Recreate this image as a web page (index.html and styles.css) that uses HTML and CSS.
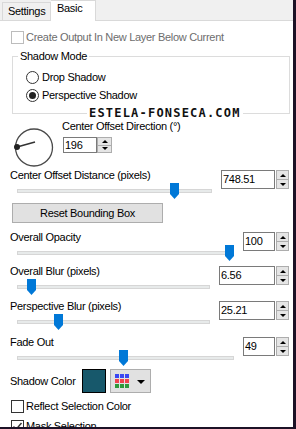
FILE: index.html
```html
<!DOCTYPE html>
<html>
<head>
<meta charset="utf-8">
<link rel="stylesheet" href="styles.css">
</head>
<body>
<div class="window">
  <div class="tabs">
    <div class="tab">Settings</div>
    <div class="tab active">Basic</div>
  </div>
  <div class="panel">
    <div class="check disabled"><span class="box"></span>Create Output In New Layer Below Current</div>

    <fieldset class="group">
      <legend>Shadow Mode</legend>
      <div class="radio"><span class="dot"></span>Drop Shadow</div>
      <div class="radio on"><span class="dot"></span>Perspective Shadow</div>
    </fieldset>
    <div class="watermark">ESTELA-FONSECA.COM</div>

    <div class="dir">
      <svg class="dial" width="42" height="42" viewBox="0 0 42 42">
        <circle cx="21" cy="20.5" r="18.5" fill="none" stroke="#4a4a4a" stroke-width="1.3"/>
        <line x1="4" y1="20" x2="22" y2="15" stroke="#333" stroke-width="1.6"/>
        <circle cx="4" cy="20" r="3" fill="#222"/>
      </svg>
      <div class="dir-ctl">
        <div class="lbl">Center Offset Direction (°)</div>
        <div class="spin sm">
          <div class="spin-box">196</div>
          <div class="spin-btns"><span class="sb up"></span><span class="sb down"></span></div>
        </div>
      </div>
    </div>

    <div class="srow">
      <div class="sleft">
        <div class="lbl">Center Offset Distance (pixels)</div>
        <div class="slider"><div class="track"></div><svg class="thumb" style="left:153px" width="9" height="16" viewBox="0 0 9 16"><polygon points="0,0 9,0 9,11 4.5,16 0,11" fill="#0078d7"/></svg></div>
      </div>
      <div class="spin"><div class="spin-box w54">748.51</div><div class="spin-btns"><span class="sb up"></span><span class="sb down"></span></div></div>
    </div>

    <div class="btn">Reset Bounding Box</div>

    <div class="srow r-opacity">
      <div class="sleft">
        <div class="lbl">Overall Opacity</div>
        <div class="slider"><div class="track"></div><svg class="thumb" style="left:208px" width="9" height="16" viewBox="0 0 9 16"><polygon points="0,0 9,0 9,11 4.5,16 0,11" fill="#0078d7"/></svg></div>
      </div>
      <div class="spin"><div class="spin-box w32">100</div><div class="spin-btns"><span class="sb up"></span><span class="sb down"></span></div></div>
    </div>

    <div class="srow r-blur">
      <div class="sleft">
        <div class="lbl">Overall Blur (pixels)</div>
        <div class="slider"><div class="track"></div><svg class="thumb" style="left:10px" width="9" height="16" viewBox="0 0 9 16"><polygon points="0,0 9,0 9,11 4.5,16 0,11" fill="#0078d7"/></svg></div>
      </div>
      <div class="spin"><div class="spin-box w56">6.56</div><div class="spin-btns"><span class="sb up"></span><span class="sb down"></span></div></div>
    </div>

    <div class="srow r-persp">
      <div class="sleft">
        <div class="lbl">Perspective Blur (pixels)</div>
        <div class="slider"><div class="track"></div><svg class="thumb" style="left:37px" width="9" height="16" viewBox="0 0 9 16"><polygon points="0,0 9,0 9,11 4.5,16 0,11" fill="#0078d7"/></svg></div>
      </div>
      <div class="spin"><div class="spin-box w56">25.21</div><div class="spin-btns"><span class="sb up"></span><span class="sb down"></span></div></div>
    </div>

    <div class="srow r-fade">
      <div class="sleft">
        <div class="lbl">Fade Out</div>
        <div class="slider"><div class="track"></div><svg class="thumb" style="left:102px" width="9" height="16" viewBox="0 0 9 16"><polygon points="0,0 9,0 9,11 4.5,16 0,11" fill="#0078d7"/></svg></div>
      </div>
      <div class="spin"><div class="spin-box w32">49</div><div class="spin-btns"><span class="sb up"></span><span class="sb down"></span></div></div>
    </div>

    <div class="crow">
      <span class="clabel">Shadow Color</span>
      <span class="swatch"></span>
      <span class="dd">
        <svg class="grid" width="14" height="14" viewBox="0 0 14 14">
          <rect x="0" y="0" width="4" height="4" fill="#3b47f2"/><rect x="5" y="0" width="4" height="4" fill="#3b47f2"/><rect x="10" y="0" width="4" height="4" fill="#3b47f2"/>
          <rect x="0" y="5" width="4" height="4" fill="#f0424e"/><rect x="5" y="5" width="4" height="4" fill="#f0424e"/><rect x="10" y="5" width="4" height="4" fill="#f0424e"/>
          <rect x="0" y="10" width="4" height="4" fill="#2e9a3c"/><rect x="5" y="10" width="4" height="4" fill="#2e9a3c"/><rect x="10" y="10" width="4" height="4" fill="#2e9a3c"/>
        </svg>
        <svg class="arrow" width="8" height="4" viewBox="0 0 8 4"><polygon points="0,0 8,0 4,4" fill="#000"/></svg>
      </span>
    </div>

    <div class="check gap"><span class="box"></span>Reflect Selection Color</div>
    <div class="check gap"><span class="box"><svg width="11" height="11" viewBox="0 0 11 11"><polyline points="1.5,5.5 4,8.5 9.5,2" fill="none" stroke="#333" stroke-width="1.4"/></svg></span>Mask Selection</div>
  </div>
</div>
</body>
</html>
```
FILE: styles.css
```css
* { box-sizing: border-box; }
html, body { margin: 0; padding: 0; }
body {
  width: 296px;
  height: 429px;
  overflow: hidden;
  background: #fff;
  font-family: "Liberation Sans", Arial, sans-serif;
  font-size: 11px;
  line-height: 13px;
  letter-spacing: -0.3px;
  color: #000;
}
.window {
  width: 296px;
  height: 429px;
  border-right: 3px solid #1c1226;
  border-bottom: 2px solid #1c1226;
  overflow: hidden;
  background: #fff;
}
.tabs {
  display: flex;
  align-items: flex-end;
  height: 21px;
  background: #f0f0f0;
  border-bottom: 1px solid #d9d9d9;
  padding-left: 2px;
}
.tab {
  height: 18px;
  width: 49px;
  padding: 2px 0 0 5px;
  border: 1px solid #d9d9d9;
  border-bottom: none;
  background: #f0f0f0;
}
.tab.active {
  height: 21px;
  width: 45px;
  margin-bottom: -1px;
  padding: 1px 0 0 6px;
  background: #fff;
  border-left: none;
}
.panel {
  position: relative;
  padding-top: 10px;
}
.check {
  display: flex;
  align-items: center;
  height: 13px;
  margin-left: 11px;
}
.check.gap { margin-top: 7px; }
.box {
  width: 13px;
  height: 13px;
  border: 1px solid #333;
  background: #fff;
  margin-right: 2px;
  flex: none;
  display: flex;
  align-items: center;
  justify-content: center;
}
.check.disabled { color: #6d6d6d; }
.check.disabled .box { border-color: #bcbcbc; }

.group {
  margin: 6px 3px 0 12px;
  padding: 8px 0 11px 0;
  border: 1px solid #dcdcdc;
  min-width: 0;
}
.group legend {
  padding: 0 2px;
  margin-left: 5px;
  line-height: 13px;
}
.radio {
  display: flex;
  align-items: center;
  height: 13px;
  margin-left: 13px;
}
.radio + .radio { margin-top: 5px; }
.dot {
  width: 13px;
  height: 13px;
  border: 1px solid #333;
  border-radius: 50%;
  margin-right: 3px;
  flex: none;
  display: flex;
  align-items: center;
  justify-content: center;
}
.radio.on .dot::after {
  content: "";
  width: 7px;
  height: 7px;
  border-radius: 50%;
  background: #222;
}
.watermark {
  position: absolute;
  left: 87px;
  top: 86px;
  padding: 0 2px;
  background: #fff;
  font-family: "DejaVu Sans Mono", monospace;
  font-weight: bold;
  font-size: 12px;
  line-height: 12px;
  letter-spacing: 1.2px;
  color: #111;
}

.dir {
  display: flex;
  margin-top: 6px;
}
.dial {
  flex: none;
  margin: 7px 0 0 13px;
}
.dir-ctl { margin-left: 7px; }
.dir-ctl .spin { margin: 4px 0 0 1px; }

.spin {
  display: flex;
  gap: 1px;
  flex: none;
}
.spin-box {
  height: 19px;
  border: 1px solid #7a7a7a;
  padding-left: 1px;
  line-height: 17px;
  background: #fff;
}
.spin-btns {
  display: flex;
  flex-direction: column;
  width: 13px;
  height: 19px;
}
.sb {
  flex: 1;
  border: 1px solid #adadad;
  background: #e5e5e5;
  display: flex;
  align-items: center;
  justify-content: center;
}
.sb + .sb { border-top: none; }
.sb.up::after {
  content: "";
  border-left: 3px solid transparent;
  border-right: 3px solid transparent;
  border-bottom: 3px solid #000;
}
.sb.down::after {
  content: "";
  border-left: 3px solid transparent;
  border-right: 3px solid transparent;
  border-top: 3px solid #000;
}
.spin.sm { gap: 0; }
.spin.sm .spin-box { width: 34px; height: 16px; line-height: 14px; }
.spin.sm .spin-btns { width: 15px; height: 16px; }
.w32 { width: 32px; }
.w54 { width: 54px; }
.w56 { width: 56px; }

.srow {
  display: flex;
  align-items: flex-start;
}
.srow .spin {
  margin-top: 1px;
  margin-right: 4px;
}
.sleft {
  flex: 1;
  padding-left: 10px;
}
.slider {
  position: relative;
  height: 18px;
  margin: 0 9px 0 7px;
}
.track {
  position: relative;
  top: 7px;
  height: 4px;
  background: #e7eaea;
  border: 1px solid #d6d6d6;
}
.thumb {
  position: absolute;
  top: 1px;
}
.btn {
  margin: 3px 0 0 12px;
  width: 151px;
  height: 20px;
  border: 1px solid #adadad;
  background: #e1e1e1;
  text-align: center;
  line-height: 18px;
}
.r-opacity { margin-top: 8px; }
.r-blur { margin-top: 3px; }
.r-persp { margin-top: 4px; }
.r-fade { margin-top: 5px; }

.crow {
  display: flex;
  align-items: center;
  height: 24px;
  margin-top: 2px;
  padding-left: 10px;
}
.clabel { width: 72px; }
.swatch {
  width: 24px;
  height: 24px;
  border: 1px solid #000;
  background: #17586b;
}
.dd {
  margin-left: 4px;
  width: 41px;
  height: 24px;
  border: 1px solid #adadad;
  background: #e1e1e1;
  display: flex;
  align-items: center;
  padding-left: 4px;
}
.dd .arrow { margin-left: 8px; margin-top: 1px; }
```
